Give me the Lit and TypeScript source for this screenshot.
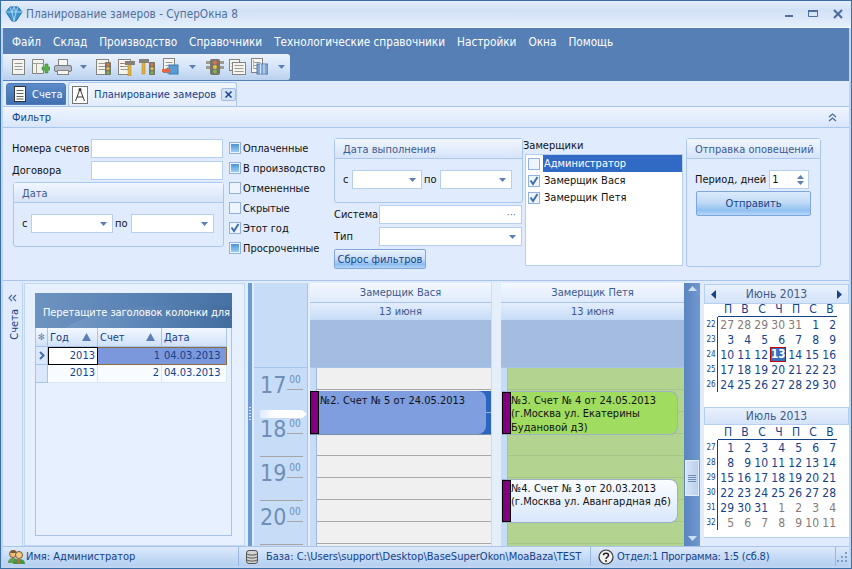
import { LitElement, html, css, svg } from "lit";
import { customElement } from "lit/decorators.js";

const ic = (w: number, h: number, body: unknown) =>
  html`<svg class="ic" width=${w} height=${h} viewBox="0 0 ${w} ${h}">${body}</svg>`;

const doc = (x = 0, y = 0, w = 12, h = 15) => svg`
  <rect x=${x + 0.5} y=${y + 0.5} width=${w} height=${h} fill="#f4f4f0" stroke="#85857e"/>
  <path d="M${x + 2.5} ${y + 4.5}h${w - 4}M${x + 2.5} ${y + 7.5}h${w - 4}M${x + 2.5} ${y + 10.5}h${w - 4}" stroke="#9a9a92"/>`;
const light = (x = 0, y = 0) => svg`
  <rect x=${x} y=${y} width="6" height="13" rx="1" fill="#77746a"/>
  <circle cx=${x + 3} cy=${y + 2.5} r="1.6" fill="#d9734a"/>
  <circle cx=${x + 3} cy=${y + 6.5} r="1.6" fill="#e8c33c"/>
  <circle cx=${x + 3} cy=${y + 10.5} r="1.6" fill="#79b554"/>`;
const hammer = (x = 0, y = 0) => svg`
  <rect x=${x + 3} y=${y + 3} width="3" height="12" fill="#e1b23c" stroke="#a8832a" stroke-width=".5"/>
  <rect x=${x} y=${y} width="10" height="4" fill="#85817a"/>`;

const icons = {
  doc: ic(18, 18, doc(2, 1)),
  docPlus: ic(18, 18, svg`
    <path d="M.5 1.500h11v14h-11z" fill="#f3f3ee" stroke="#85857e"/><path d="M.5 5.500h11M4.500 5.500v10" stroke="#a0a09a"/>
    <path d="M10 9h3V6h3v3h2v3h-2v3h-3v-3h-3z" fill="#59b04a" stroke="#3d8a33" stroke-width=".6"/>`),
  printer: ic(18, 18, svg`
    <rect x="4.500" y="1.500" width="9" height="6" fill="#f5f5f2" stroke="#85857e"/>
    <rect x=".5" y="7.500" width="17" height="6" rx="1.500" fill="#b5bdc8" stroke="#757c86"/>
    <rect x="3.500" y="12.500" width="11" height="4" fill="#f5f5f2" stroke="#85857e"/>`),
  docLight: ic(18, 18, svg`${doc(1, 1)}${light(10, 4)}`),
  docHammer: ic(18, 18, svg`${doc(1, 1)}${hammer(8, 3)}<path d="M3.500 5.500h2M3.500 8.500h2" stroke="#c0553a"/>`),
  hammerLight: ic(18, 18, svg`${hammer(0, 1)}${light(10, 4)}`),
  docBox: ic(18, 18, svg`${doc(2, 0, 11, 14)}
    <rect x="8" y="7" width="9" height="9" fill="#5b9bd5" stroke="#3e78ad"/>
    <path d="M1 11h5V9l4 3.500L6 16v-2H1z" fill="#e2663f"/>`),
  light: ic(18, 18, svg`<path d="M0 3h5v3H0zM13 3h5v3h-5zM0 8h5v3H0zM13 8h5v3h-5z" fill="#9d9a8e"/>
    <rect x="4" y="1" width="10" height="16" rx="2" fill="#77746a"/>
    <circle cx="9" cy="4.500" r="2" fill="#d9734a"/><circle cx="9" cy="9" r="2" fill="#e8c33c"/><circle cx="9" cy="13.500" r="2" fill="#79b554"/>`),
  docs: ic(18, 18, svg`${doc(1, 1, 10, 11)}<rect x="4.500" y="4.500" width="13" height="12" fill="#f4f4f0" stroke="#85857e"/>
    <path d="M6.500 7.500h9M6.500 10.500h9M6.500 13.500h9" stroke="#9a9a92"/>`),
  docCols: ic(18, 18, svg`${doc(1, 0, 11, 14)}
    <rect x="7" y="6" width="11" height="10" fill="#7fa9d4" stroke="#4f7fae"/><path d="M10.500 6v10M14 6v10" stroke="#d7e6f5"/>
    <path d="M3 3h1M3 6h1M3 9h1" stroke="#c0553a"/>`),
  sheet: ic(14, 16, svg`<rect x="1.500" y=".5" width="11" height="15" fill="#f8f8f4" stroke="#333"/>
    <path d="M3.500 4.500h7M3.500 7.500h7M3.500 10.500h7M3.500 13h7" stroke="#666"/>`),
  compass: ic(16, 18, svg`<rect x=".5" y=".5" width="15" height="17" fill="#fff" stroke="#777"/>
    <path d="M8 3 3.500 15M8 3l4.500 12M5 11h6" fill="none" stroke="#333"/><circle cx="8" cy="3.500" r="1.500" fill="#333"/>`),
  app: ic(18, 16, svg`<path d="M1 6 5 1h8l4 5-6 9H7z" fill="#3f93cf" stroke="#1e6ea8"/>
    <path d="M1 6h16M5 1l2 5 2 9 2-9 2-5M7 6l2-5 2 5" fill="none" stroke="#bfe3f7" stroke-width=".8"/>`),
  users: ic(18, 18, svg`
    <circle cx="6" cy="6" r="3.500" fill="#e6bd7f" stroke="#7d5a2a"/>
    <path d="M6 2a4 4 0 0 1 4 3L3 5a4 4 0 0 1 3-3z" fill="#7a5a2e"/>
    <circle cx="12" cy="7" r="3.500" fill="#f0c98c" stroke="#7d5a2a"/>
    <path d="M1 15c0-4 3-5 5-5s5 1 5 5z" fill="#5f9e4e"/>
    <path d="M6 16c0-4 3-5 6-5s6 1 6 5z" fill="#4b9247"/><path d="M11 11h2l-.5 5h-1z" fill="#e2663f"/>`),
  db: ic(12, 16, svg`<rect x=".5" y="1.500" width="11" height="13" rx="2.500" fill="#d3d3cf" stroke="#555"/>
    <path d="M1 5c2 1.500 8 1.500 10 0M1 8c2 1.500 8 1.500 10 0M1 11c2 1.500 8 1.500 10 0" fill="none" stroke="#555"/>`),
  help: ic(16, 16, svg`<circle cx="8" cy="8" r="7" fill="#f2f2f2" stroke="#333" stroke-width="1.200"/>
    <path d="M5.500 6.200C5.500 3.500 10.500 3.500 10.500 6.200 10.500 8 8 8 8 10" fill="none" stroke="#222" stroke-width="1.500"/><circle cx="8" cy="12" r="1" fill="#222"/>`),
  check: html`<svg class="ic" width="10" height="10" viewBox="0 0 10 10"><path d="M1.500 4.500 4 8l4.500-7" fill="none" stroke="#3f6fb0" stroke-width="2"/></svg>`,
};

const dropArrow = html`<svg class="ic" width="7" height="4" viewBox="0 0 7 4"><path d="M0 0h7L3.500 4z" fill="#5b7fb4"/></svg>`;

type Event = { top: number; text: string[]; cls: string };

@customElement("app-root")
export class AppRoot extends LitElement {
  static styles = css`
    :host { display: block; width: 852px; height: 569px; overflow: hidden;
      font-family: "DejaVu Sans Condensed", "DejaVu Sans", sans-serif; font-stretch: condensed; font-size: 11px; color: #111; }
    * { box-sizing: border-box; }
    .ic { display: block; flex: none; }
    .win { width: 852px; height: 569px; border: 1px solid #3a6ea5; padding: 0 2px 2px;
      background: #bfd5f1; display: flex; flex-direction: column; }
    .title { height: 27px; margin: 0 -2px; padding: 0 8px 0 4px; display: flex; align-items: center; gap: 3px;
      background: linear-gradient(#e4eefb, #d1e1f6 35%, #dce8f9 70%, #e6f0fc); border-bottom: 1px solid #f2f7fe;
      color: #4f6f9c; font-size: 11.7px; }
    .title span { flex: 1; }
    .wbtns { display: flex; gap: 15px; align-items: center; }
    .menubar { height: 53px; background: #557fb5; display: flex; flex-direction: column; }
    .menu { height: 26px; display: flex; align-items: center; gap: 12px; padding: 1px 0 0 9px; color: #fff; font-size: 11.7px; }
    .toolbar { height: 26px; width: 287px; display: flex; align-items: center; padding-left: 7px; border-radius: 0 3px 3px 0;
      background: linear-gradient(#eaf2fd, #d8e6f9 45%, #b9d1ef); }
    .tb { margin-right: 4px; }
    .tb-arrow { margin: 0 3px 0 4px; }
    .tb-arrow.w { margin: 0 5px 0 6px; }
    .tb-sep { width: 1px; height: 26px; background: #f4f8fe; margin-right: 5px; }
    .tabs { height: 25px; background: #e0ecfd; display: flex; align-items: flex-end; padding-left: 3px; gap: 2px; white-space: nowrap; }
    .tab { display: flex; align-items: center; border-radius: 3px 3px 0 0; }
    .tab.a { width: 60px; height: 22px; margin-bottom: 1px; padding-left: 6px; gap: 5px; color: #fff;
      background: linear-gradient(#5d8bc9, #3f70b2); border: 1px solid #4f7cb8; }
    .tab.b { width: 169px; height: 24px; padding-left: 3px; gap: 6px; color: #15428b; background: linear-gradient(#f0f6fe, #e2edfc);
      border: 1px solid #aac7ee; border-bottom: none; }
    .tab.b span { width: 121px; }
    .close { width: 15px; height: 13px; border: 1px solid #9fbce4; border-radius: 2px; background: #d4e3f8;
      display: flex; align-items: center; justify-content: center; }
    .filter { height: 175px; display: flex; flex-direction: column; background: #e0ecfd; border-top: 1px solid #a8c4e8; border-bottom: 1px solid #a8c4e8; }
    .fhead { height: 21px; display: flex; align-items: center; justify-content: space-between; padding: 0 12px 0 9px; color: #15428b;
      background: linear-gradient(#eef5ff, #d9e6fa); border-bottom: 1px solid #a8c7ee; }
    .fbody { flex: 1; display: flex; padding: 10px 0 0 9px; }
    .c1 { width: 217px; padding-top: 1px; }
    .c2 { width: 105px; }
    .c3 { width: 189px; }
    .c4 { width: 163px; }
    .c5 { width: 135px; }
    .row { display: flex; align-items: center; height: 19px; margin-bottom: 3px; }
    .row label { width: 79px; white-space: nowrap; }
    .inp { height: 19px; background: #fff; border: 1px solid #b7cfee; display: flex; align-items: center; justify-content: flex-end; padding: 0 5px; }
    .w132 { width: 132px; }
    .grp { border: 1px solid #aac7ee; border-radius: 3px; }
    .grp-h { height: 20px; display: flex; align-items: center; padding: 1px 0 0 8px; color: #3d5a90; background: linear-gradient(#f0f6fe, #d6e4f9); border-bottom: 1px solid #aac7ee; }
    .g1 { width: 211px; height: 65px; margin: -1px 0 0 1px; }
    .dates { display: flex; align-items: center; padding: 11px 0 0 8px; }
    .dates .po { margin: 0 3px 0 2px; }
    .dates .s { width: 9px; }
    .w82 { width: 82px; }
    .w83 { width: 83px; }
    .w70 { width: 70px; }
    .w72 { width: 72px; }
    .chk { height: 20px; display: flex; align-items: center; gap: 2px; white-space: nowrap; }
    .box { width: 12px; height: 12px; flex: none; border: 1px solid #93b3de; background: #eef4fc; display: flex; align-items: center; justify-content: center; }
    .box.ind::before { content: ""; width: 8px; height: 8px; background: linear-gradient(#4c94d8, #9ccbf2); }
    .g3 { height: 65px; margin-bottom: 2px; }
    .r3 { display: flex; align-items: center; height: 19px; margin-bottom: 3px; }
    .r3 label { width: 45px; }
    .w143 { width: 143px; }
    .dots { color: #5b7fb4; }
    .btn { height: 20px; display: flex; align-items: center; justify-content: center; color: #15428b; border: 1px solid #7ea6dc; border-radius: 2px; white-space: nowrap;
      background: linear-gradient(#e9f2fd, #c9def7 50%, #8cbdf0 80%, #b4d4f7); }
    .reset { width: 92px; }
    .c4 .cap { height: 16px; line-height: 16px; }
    .list { width: 158px; height: 112px; margin-left: 2px; background: #fff; border: 1px solid #b7cfee; }
    .li { height: 17px; display: flex; align-items: center; padding-left: 2px; gap: 3px; }
    .li .t { flex: 1; height: 17px; line-height: 17px; padding-left: 1px; }
    .li.sel .t { background: #316ac5; color: #fff; }
    .g5 { height: 129px; }
    .per { display: flex; align-items: center; padding: 11px 0 0 8px; gap: 3px; white-space: nowrap; }
    .spin { width: 40px; justify-content: space-between; padding: 0 4px 0 2px; }
    .spin-a { display: flex; flex-direction: column; gap: 2px; }
    .send { width: 115px; height: 25px; margin: 2px 0 0 9px; background: linear-gradient(#dceafb, #c2dbf7 45%, #8fc0f2 80%, #b8d8f8); }
    .lower { height: 265px; display: flex; background: #e0ecfd; }
    .strip { width: 20px; padding-top: 11px; display: flex; flex-direction: column; align-items: center; gap: 7px; color: #15428b; border-right: 1px solid #b9d0ef; margin-top: 2px; }
    .strip b { font-weight: 400; writing-mode: vertical-rl; transform: rotate(180deg); margin-left: 3px; }
    .panel { width: 221px; margin: 2px 0 0 1px; background: #e6f0fe; border: 1px solid #c2d7f3; padding: 9px 0 9px 10px; display: flex; flex-direction: column; }
    .gp { width: 197px; height: 35px; overflow: hidden; position: relative; color: #fff; padding: 13px 0 0 8px; white-space: nowrap; letter-spacing: -.1px;
      background: linear-gradient(90deg, #7da0c9, #5f88b9 50%, #436d9f); }
    .gp svg { position: absolute; left: 0; top: 0; }
    .gp span { position: relative; }
    .grid { width: 191px; display: grid; grid-template-columns: 12px 50px 64px 65px; color: #15428b; }
    .gridbox { width: 197px; flex: 1; border: 1px solid #a9c4e8; border-top: none; }
    .gh { height: 19px; display: flex; align-items: center; justify-content: space-between; padding: 0 6px 0 2px;
      background: linear-gradient(#f3f8ff, #cfe1f8); border-right: 1px solid #a9c4e8; border-bottom: 1px solid #a9c4e8; }
    .gh.ind { justify-content: center; padding: 0; color: #5b7fb4; font-size: 9px; }
    .gi { height: 18px; display: flex; align-items: center; justify-content: center; background: #dbe8fb; border-right: 1px solid #a9c4e8; border-bottom: 1px solid #a9c4e8; }
    .gc { height: 18px; line-height: 16px; padding: 0 2px; background: #f8fbff; border-right: 1px solid #d9e6f8; border-bottom: 1px solid #d9e6f8; }
    .gc.r { text-align: right; }
    .gc.cur { background: #fff; border: 1px solid #000; }
    .gc.sel { background: #7b98dc; border-top: 1px solid #8a6d3b; border-bottom: 1px solid #8a6d3b; border-right: none; }
    .gc.sel.end { border-right: 1px solid #8a6d3b; }
    .split { width: 9px; padding: 2px 2px 0 3px; }
    .split i { display: block; height: 100%; width: 4px;
      background: repeating-linear-gradient(#e5effc 0 1px, transparent 1px 3px) 1px 124px / 2px 14px no-repeat, #6f9bd3; }
    .sched { width: 446px; display: flex; margin-top: 2px; background: #e5effc; overflow: hidden; }
    .times { width: 54px; background: #c6dcf7; border-right: 1px solid #a8c4e8; position: relative; }
    .times-top { height: 85px; border-bottom: 1px solid #a8c4e8; }
    .hour { height: 44px; margin: 0 4px 0 6px; border-top: 1px solid #a5a5a5; color: #6f8fb6; display: flex; }
    .hour.first { border-top-color: transparent; }
    .hour b { font-weight: 400; font-size: 23px; line-height: 26px; width: 26px; height: 30px; text-align: right; padding-top: 3px; font-stretch: normal; }
    .hour u { text-decoration: none; font-size: 10px; line-height: 14px; height: 21px; padding-top: 4px; width: 18px; margin-left: 1px; text-align: center; border-bottom: 1px solid #a5a5a5; }
    .marker { position: absolute; left: 6px; top: 127px; width: 47px; height: 8px; background: linear-gradient(90deg, #dfeafa, #fff 30%); clip-path: polygon(0 0, 90% 0, 100% 50%, 90% 100%, 0 100%); }
    .gapc { width: 2px; }
    .col { display: flex; flex-direction: column; }
    .col.v { width: 181px; }
    .col.p { width: 183px; }
    .gap10 { width: 10px; background: #e5effc; border-left: 1px solid #c6dcf7; }
    .ch { height: 20px; display: flex; align-items: center; justify-content: center; color: #3d5a90; background: linear-gradient(#f3f8ff, #dfeafb); border-bottom: 1px solid #a9c4e8; }
    .ch.d { height: 17px; background: linear-gradient(#e4eefc, #c6dcf7); border-bottom: none; }
    .allday { height: 48px; background: #a3bcdf; border-bottom: 1px solid #a8c4e8; }
    .body { flex: 1; display: flex; position: relative; overflow: hidden; }
    .bstrip { width: 7px; background: #c6dcf7; border-right: 1px solid #9fb9de; }
    .cells { flex: 1; }
    .cell { height: 22px; border-bottom: 1px solid #a8a8a8; background: #f0f0f0; }
    .p .cell { background: #b2d490; border-bottom-color: #a5c687; }
    .ev { position: absolute; height: 44px; left: 0; border-radius: 0 8px 8px 0; overflow: hidden; color: #111; padding: 3px 0 0 10px; line-height: 13.3px; }
    .ev::before { content: ""; position: absolute; left: 0; top: 0; bottom: 0; width: 7px; background: #800080; border: 1px solid #000; }
    .ev div { white-space: nowrap; }
    .ev.blue { width: 181px; z-index: 0; border-radius: 0; background: linear-gradient(#2a66c0 21px, #9fb0cc 21px, #9fb0cc 22px, #2a66c0 22px); border-bottom: 1px solid #7c8fa8; }
    .ev.blue::after { content: ""; position: absolute; z-index: -1; left: 0; right: 5px; top: 0; bottom: 0; background: #7f9ee0; border-radius: 0 8px 8px 0; }
    .ev.green { width: 176px; left: 1px; padding: 2px 0 0 9px; background: #a0dc60; border: 1px solid #9cb0c8; border-left: none; }
    .ev.white { width: 176px; left: 1px; padding: 2px 0 0 9px; background: linear-gradient(#fbfdff, #d9e7fb); border: 1px solid #9cb0c8; border-left: none; }
    .sb { width: 16px; background: linear-gradient(90deg, #5a85bf, #7198cf); display: flex; flex-direction: column; align-items: center; padding-top: 3px; }
    .thumb { width: 14px; height: 36px; margin-top: 169px; background: linear-gradient(90deg, #d6e4f7, #b9cfec); border: 1px solid #e4eefb; display: flex; flex-direction: column; align-items: center; justify-content: center; gap: 1px; }
    .thumb i { width: 8px; height: 1px; background: #6f8fb6; }
    .sb .dn { margin-top: auto; margin-bottom: 5px; }
    .cal { width: 145px; margin-left: 4px; margin-top: 3px; background: #fff; display: flex; flex-direction: column; }
    .mh { display: flex; align-items: center; justify-content: space-between; padding: 0 6px; height: 20px; color: #3d5a90; font-size: 12px; background: linear-gradient(#e9f1fd, #d4e3f8); border: 1px solid #b7cfee; }
    .mh span { flex: 1; text-align: center; }
    .dgrid { display: grid; grid-template-columns: 13px repeat(7, 17px); padding-left: 1px; }
    .dow { height: 13px; font-size: 12px; line-height: 10px; text-align: center; color: #15428b; padding-left: 3px; border-bottom: 1px solid #15428b; }
    .dow.e { border-bottom: none; padding: 0; }
    .wk { height: 15px; font-size: 8px; line-height: 15px; text-align: center; color: #15428b; border-right: 1px solid #15428b; }
    .dd { height: 15px; font-size: 12px; line-height: 16px; text-align: right; padding-right: 1px; color: #15428b; }
    .dd.o { color: #857a78; }
    .dd.t { background: #3a6fc0; color: #fff; font-weight: 700; font-size: 11.500px; border: 1px solid #c00000; line-height: 13px; text-align: center; padding: 0; margin-left: 1px; }
    .m2 { margin-top: 15px; }
    .m2 .mh { height: 18px; }
    .m2 .dow { height: 15px; line-height: 14px; }
    .calfoot { margin-top: auto; height: 9px; background: #e0ecfd; border-top: 1px solid #b7cfee; }
    .status { height: 20px; display: flex; align-items: center; color: #15428b; background: linear-gradient(#dceafb, #c3d9f5 60%, #b7d0f0); border-top: 1px solid #a9c4e8; white-space: nowrap; }
    .st { display: flex; align-items: center; height: 100%; border-right: 1px solid #9ab8dd; }
    .st1 { width: 236px; padding-left: 4px; gap: 1px; }
    .st2 { width: 352px; padding-left: 7px; gap: 8px; }
    .st3 { flex: 1; padding-left: 7px; gap: 3px; letter-spacing: -.2px; }
    .grip { width: 13px; }
  `;

  private days(items: (number | string)[][], weeks: number[], today?: number) {
    return items.map((r, i) => html`<div class="wk">${weeks[i]}</div>${r.map((d) => {
      const old = typeof d === "string";
      return html`<div class="dd ${old ? "o" : ""} ${d === today ? "t" : ""}">${d}</div>`;
    })}`);
  }

  private month(title: string, nav: boolean, rows: (number | string)[][], weeks: number[], today?: number) {
    return html`<div class="mh">
        ${nav ? html`<svg class="ic" width="5" height="9" viewBox="0 0 5 9"><path d="M5 0v9L0 4.500z" fill="#15428b"/></svg>` : ""}
        <span>${title}</span>
        ${nav ? html`<svg class="ic" width="5" height="9" viewBox="0 0 5 9"><path d="M0 0v9l5-4.500z" fill="#15428b"/></svg>` : ""}
      </div>
      <div class="dgrid">
        <div class="dow e"></div>
        ${["П", "В", "С", "Ч", "П", "С", "В"].map((d) => html`<div class="dow">${d}</div>`)}
        ${this.days(rows, weeks, today)}
      </div>`;
  }

  private column(cls: string, name: string, events: Event[]) {
    return html`<div class="col ${cls}">
      <div class="ch">${name}</div>
      <div class="ch d">13 июня</div>
      <div class="allday"></div>
      <div class="body">
        <div class="bstrip"></div>
        <div class="cells">${Array.from({ length: 9 }, () => html`<div class="cell"></div>`)}</div>
        ${events.map((e) => html`<div class="ev ${e.cls}" style="top:${e.top}px">${e.text.map((t) => html`<div>${t}</div>`)}</div>`)}
      </div>
    </div>`;
  }

  private chk(label: string, state: string) {
    return html`<div class="chk"><div class="box ${state === "i" ? "ind" : ""}">${state === "c" ? icons.check : ""}</div>${label}</div>`;
  }

  render() {
    const june = [
      ["27", "28", "29", "30", "31", 1, 2], [3, 4, 5, 6, 7, 8, 9], [10, 11, 12, 13, 14, 15, 16],
      [17, 18, 19, 20, 21, 22, 23], [24, 25, 26, 27, 28, 29, 30],
    ];
    const july = [
      [1, 2, 3, 4, 5, 6, 7], [8, 9, 10, 11, 12, 13, 14], [15, 16, 17, 18, 19, 20, 21], [22, 23, 24, 25, 26, 27, 28],
      [29, 30, 31, "1", "2", "3", "4"], ["5", "6", "7", "8", "9", "10", "11"],
    ];
    const sort = html`<svg class="ic" width="9" height="8" viewBox="0 0 9 8"><path d="M4.500 0 9 8H0z" fill="#5b7fb4"/></svg>`;
    return html`<div class="win">
      <div class="title">${icons.app}<span>Планирование замеров - СуперОкна 8</span>
        <div class="wbtns">
          <svg class="ic" width="8" height="10" viewBox="0 0 8 10"><path d="M0 6h8v2H0z" fill="#4f6f9c"/></svg>
          <svg class="ic" width="10" height="10" viewBox="0 0 10 10"><path d="M.5 1.500h9v6h-9z" fill="none" stroke="#4f6f9c"/><path d="M0 1h10v2H0z" fill="#4f6f9c"/></svg>
          <svg class="ic" width="10" height="10" viewBox="0 0 10 10"><path d="M1 1l8 8M9 1 1 9" stroke="#4f6f9c" stroke-width="2.200"/></svg>
        </div>
      </div>
      <div class="menubar">
        <div class="menu">${["Файл", "Склад", "Производство", "Справочники", "Технологические справочники", "Настройки", "Окна", "Помощь"].map((m) => html`<span>${m}</span>`)}</div>
        <div class="toolbar">
          <div class="tb">${icons.doc}</div><div class="tb">${icons.docPlus}</div><div class="tb">${icons.printer}</div>
          <div class="tb-arrow">${dropArrow}</div><div class="tb-sep"></div>
          <div class="tb">${icons.docLight}</div><div class="tb">${icons.docHammer}</div><div class="tb">${icons.hammerLight}</div><div class="tb">${icons.docBox}</div>
          <div class="tb-arrow w">${dropArrow}</div><div class="tb-sep"></div>
          <div class="tb">${icons.light}</div><div class="tb">${icons.docs}</div><div class="tb">${icons.docCols}</div>
          <div class="tb-arrow w">${dropArrow}</div>
        </div>
      </div>
      <div class="tabs">
        <div class="tab a">${icons.sheet}<span>Счета</span></div>
        <div class="tab b">${icons.compass}<span>Планирование замеров</span>
          <div class="close"><svg class="ic" width="7" height="7" viewBox="0 0 7 7"><path d="M.5.5l6 6M6.500.5l-6 6" stroke="#15428b" stroke-width="1.500"/></svg></div>
        </div>
      </div>
      <div class="filter">
        <div class="fhead"><span>Фильтр</span>
          <svg class="ic" width="9" height="9" viewBox="0 0 9 9"><path d="M1 4l3.500-3L8 4M1 8l3.500-3L8 8" fill="none" stroke="#4a6a9c" stroke-width="1.300"/></svg>
        </div>
        <div class="fbody">
          <div class="c1">
            <div class="row"><label>Номера счетов</label><div class="inp w132"></div></div>
            <div class="row"><label>Договора</label><div class="inp w132"></div></div>
            <div class="grp g1"><div class="grp-h">Дата</div>
              <div class="dates"><span class="s">с</span><div class="inp w82">${dropArrow}</div><span class="po">по</span><div class="inp w83">${dropArrow}</div></div>
            </div>
          </div>
          <div class="c2">
            ${this.chk("Оплаченные", "i")}${this.chk("В производство", "i")}${this.chk("Отмененные", "")}
            ${this.chk("Скрытые", "")}${this.chk("Этот год", "c")}${this.chk("Просроченные", "i")}
          </div>
          <div class="c3">
            <div class="grp g3"><div class="grp-h">Дата выполнения</div>
              <div class="dates"><span class="s">с</span><div class="inp w70">${dropArrow}</div><span class="po">по</span><div class="inp w72">${dropArrow}</div></div>
            </div>
            <div class="r3"><label>Система</label><div class="inp w143 dots">···</div></div>
            <div class="r3"><label>Тип</label><div class="inp w143">${dropArrow}</div></div>
            <div class="btn reset">Сброс фильтров</div>
          </div>
          <div class="c4">
            <div class="cap">Замерщики</div>
            <div class="list">
              <div class="li sel"><div class="box"></div><div class="t">Администратор</div></div>
              <div class="li"><div class="box">${icons.check}</div><div class="t">Замерщик Вася</div></div>
              <div class="li"><div class="box">${icons.check}</div><div class="t">Замерщик Петя</div></div>
            </div>
          </div>
          <div class="c5">
            <div class="grp g5"><div class="grp-h">Отправка оповещений</div>
              <div class="per">Период, дней <div class="inp spin"><span>1</span>
                <div class="spin-a"><svg class="ic" width="7" height="4" viewBox="0 0 7 4"><path d="M0 4h7L3.500 0z" fill="#5b7fb4"/></svg>${dropArrow}</div></div></div>
              <div class="btn send">Отправить</div>
            </div>
          </div>
        </div>
      </div>
      <div class="lower">
        <div class="strip">
          <svg class="ic" width="9" height="8" viewBox="0 0 9 8"><path d="M4 1 1 4l3 3M8 1 5 4l3 3" fill="none" stroke="#4a6a9c" stroke-width="1.200"/></svg>
          <b>Счета</b>
        </div>
        <div class="panel">
          <div class="gp">
            <svg width="197" height="35" viewBox="0 0 197 35"><path d="M0 0h197v13C120 8 60 16 30 35H0z" fill="#4f7bae" opacity=".35"/></svg>
            <span>Перетащите заголовок колонки для</span>
          </div>
          <div class="gridbox">
            <div class="grid">
              <div class="gh ind">✻</div>
              <div class="gh">Год ${sort}</div><div class="gh">Счет ${sort}</div><div class="gh">Дата</div>
              <div class="gi"><svg class="ic" width="6" height="9" viewBox="0 0 6 9"><path d="M1 1l3.500 3.500L1 8" fill="none" stroke="#3f6fb0" stroke-width="2"/></svg></div>
              <div class="gc r cur">2013</div><div class="gc r sel">1</div><div class="gc sel end">04.03.2013</div>
              <div class="gi"></div>
              <div class="gc r">2013</div><div class="gc r">2</div><div class="gc">04.03.2013</div>
            </div>
          </div>
        </div>
        <div class="split"><i></i></div>
        <div class="sched">
          <div class="times">
            <div class="times-top"></div>
            ${[17, 18, 19, 20, 21].map((h, i) => html`<div class="hour ${i === 0 ? "first" : ""}"><b>${h}</b><u>00</u></div>`)}
            <div class="marker"></div>
          </div>
          <div class="gapc"></div>
          ${this.column("v", "Замерщик Вася", [{ top: 23, cls: "blue", text: ["№2. Счет № 5 от 24.05.2013"] }])}
          <div class="gap10"></div>
          ${this.column("p", "Замерщик Петя", [
            { top: 23, cls: "green", text: ["№3. Счет № 4 от 24.05.2013", "(г.Москва ул. Екатерины", "Будановой д3)"] },
            { top: 111, cls: "white", text: ["№4. Счет № 3 от 20.03.2013", "(г.Москва ул. Авангардная д6)"] },
          ])}
          <div class="sb">
            <svg class="ic" width="9" height="5" viewBox="0 0 9 5"><path d="M0 5h9L4.500 0z" fill="#cfe0f5"/></svg>
            <div class="thumb"><i></i><i></i><i></i><i></i></div>
            <svg class="ic dn" width="9" height="5" viewBox="0 0 9 5"><path d="M0 0h9L4.500 5z" fill="#cfe0f5"/></svg>
          </div>
        </div>
        <div class="cal">
          ${this.month("Июнь 2013", true, june, [22, 23, 24, 25, 26], 13)}
          <div class="m2">${this.month("Июль 2013", false, july, [27, 28, 29, 30, 31, 32])}</div>
          <div class="calfoot"></div>
        </div>
      </div>
      <div class="status">
        <div class="st st1">${icons.users}<span>Имя: Администратор</span></div>
        <div class="st st2">${icons.db}<span>База: C:\\Users\\support\\Desktop\\BaseSuperOkon\\MoaBaza\\TEST</span></div>
        <div class="st st3">${icons.help}<span>Отдел:1 Программа: 1:5 (сб.8)</span></div>
        <svg class="ic grip" width="13" height="12" viewBox="0 0 13 12"><path d="M9 1h2v2H9zM5 5h2v2H5zM9 5h2v2H9zM1 9h2v2H1zM5 9h2v2H5zM9 9h2v2H9z" fill="#7d9cc6"/></svg>
      </div>
    </div>`;
  }
}
